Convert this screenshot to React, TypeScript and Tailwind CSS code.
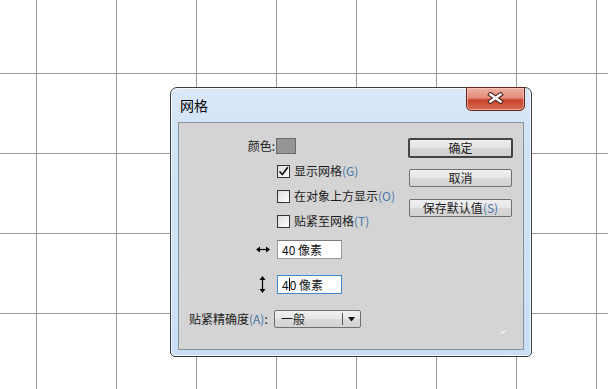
import React from "react";

const Mn = ({ children }: { children: React.ReactNode }) => (
  <span className="text-[#4b74a8]">{children}</span>
);

const Checkbox = ({ checked }: { checked?: boolean }) => (
  <div className="w-[13px] h-[13px] border border-[#333333] bg-[linear-gradient(135deg,#dcdcdc,#ffffff)] flex items-center justify-center shrink-0">
    {checked && (
      <svg width="11" height="11" viewBox="0 0 11 11">
        <path d="M1.5 5.5 L4.3 8.5 L9.8 1.2" fill="none" stroke="#111" strokeWidth="1.7" />
      </svg>
    )}
  </div>
);

const CheckRow = ({ checked, children }: { checked?: boolean; children: React.ReactNode }) => (
  <div className="mt-[9px] h-[16px] flex items-center pl-[98px]">
    <Checkbox checked={checked} />
    <span className="ml-[4px] leading-[16px] whitespace-nowrap">{children}</span>
  </div>
);

const Btn = ({ children, def }: { children: React.ReactNode; def?: boolean }) => (
  <div
    className={
      def
        ? "h-[20px] w-[105px] border-2 border-[#434343] rounded-[2px] bg-[linear-gradient(to_bottom,#eeeeee,#e4e4e4_50%,#d7d7d7_50%,#d0d0d0)] flex items-center justify-center leading-[16px]"
        : "h-[18px] w-[103px] mx-[1px] border border-[#707070] rounded-[2px] bg-[linear-gradient(to_bottom,#f0f0f0,#e6e6e6_50%,#d9d9d9_50%,#d2d2d2)] flex items-center justify-center leading-[16px]"
    }
  >
    {children}
  </div>
);

export default function App() {
  return (
    <div className="w-[608px] h-[389px] overflow-hidden bg-white bg-[linear-gradient(to_right,#9a9a9a_1px,transparent_1px),linear-gradient(to_bottom,#9a9a9a_1px,transparent_1px)] bg-[size:80px_80px] bg-[position:36px_73px] pl-[170px] pt-[87px] font-['Noto_Sans_CJK_SC','Noto_Sans',sans-serif] text-[12px] text-[#1b1b1b]">
      <div className="w-[362px] h-[270px] rounded-t-[7px] rounded-b-[5px] border border-[#3a3d42] bg-[linear-gradient(to_bottom,#dbe9f9,#d2e4f7_40px,#c9dff5)] shadow-[inset_0_0_0_1px_rgba(255,255,255,0.75)] flex flex-col px-[7px] pb-[6px]">
        <div className="h-[34px] flex items-start justify-between">
          <div className="pl-[2px] pt-[8px] text-[14px] leading-[18px] text-black">网格</div>
          <div className="w-[59px] h-[24px] -mt-[1px] -mr-[1px] rounded-b-[5px] border border-[#6b2419] bg-[linear-gradient(to_bottom,#eeb0a2,#e28c78_45%,#c8452d_55%,#d66a50)] shadow-[inset_0_0_0_1px_rgba(255,215,205,0.55)] flex items-center justify-center pb-[2px]">
            <svg width="17" height="12" viewBox="0 0 17 12">
              <path d="M3.5 2.5 L13.5 9.5 M13.5 2.5 L3.5 9.5" stroke="#4a1f18" strokeWidth="4.6" strokeLinecap="square" fill="none" />
              <path d="M3.5 2.5 L13.5 9.5 M13.5 2.5 L3.5 9.5" stroke="#ffffff" strokeWidth="2.6" strokeLinecap="square" fill="none" />
            </svg>
          </div>
        </div>
        <div className="flex-1 border border-[#8a939c] bg-[#d4d4d4] flex relative">
          <div className="w-[229px] pt-[15px] flex flex-col">
            <div className="h-[16px] flex items-center">
              <div className="w-[97px] flex justify-end pr-[1px] leading-[16px]">颜色:</div>
              <div className="w-[20px] h-[16px] bg-[#959595] border border-[#6b6b6b]" />
            </div>
            <CheckRow checked>
              显示网格<Mn>(G)</Mn>
            </CheckRow>
            <CheckRow>
              在对象上方显示<Mn>(O)</Mn>
            </CheckRow>
            <CheckRow>
              贴紧至网格<Mn>(T)</Mn>
            </CheckRow>
            <div className="mt-[11px] h-[19px] flex items-center">
              <div className="w-[98px] flex justify-end pr-[7px]">
                <svg width="14" height="7" viewBox="0 0 14 7">
                  <path d="M3 3.5 H11" stroke="#000" strokeWidth="1.2" />
                  <path d="M0 3.5 L4 0.5 L4 6.5 Z M14 3.5 L10 0.5 L10 6.5 Z" fill="#000" />
                </svg>
              </div>
              <div className="w-[65px] h-[19px] bg-white border border-[#9a9a9a] border-t-[#7a7a7a] flex items-center pl-[4px] leading-[16px] text-[#111]">
                40 像素
              </div>
            </div>
            <div className="mt-[16px] h-[19px] flex items-center">
              <div className="w-[98px] flex justify-end pr-[11px]">
                <svg width="7" height="17" viewBox="0 0 7 17">
                  <path d="M3.5 3 V14" stroke="#000" strokeWidth="1.2" />
                  <path d="M3.5 0 L0.5 4 L6.5 4 Z M3.5 17 L0.5 13 L6.5 13 Z" fill="#000" />
                </svg>
              </div>
              <div className="w-[65px] h-[19px] bg-white border border-[#3d8ad0] flex items-center pl-[4px] leading-[16px] text-[#111]">
                4<span className="inline-block w-px h-[13px] bg-black" />0 像素
              </div>
            </div>
            <div className="mt-[16px] h-[18px] flex items-center pl-[10px]">
              <div className="w-[85px] leading-[16px] whitespace-nowrap">
                贴紧精确度<Mn>(A)</Mn>:
              </div>
              <div className="w-[87px] h-[18px] border border-[#707070] rounded-[2px] bg-[linear-gradient(to_bottom,#f0f0f0,#e6e6e6_50%,#dadada_50%,#d3d3d3)] flex items-center">
                <span className="flex-1 pl-[6px] leading-[16px]">一般</span>
                <span className="w-px h-[12px] bg-[#555]" />
                <span className="w-[17px] flex justify-center">
                  <svg width="7" height="5" viewBox="0 0 7 5">
                    <path d="M0 0 H7 L3.5 4.5 Z" fill="#111" />
                  </svg>
                </span>
              </div>
            </div>
          </div>
          <div className="w-[105px] pt-[15px] flex flex-col">
            <Btn def>确定</Btn>
            <div className="mt-[11px]">
              <Btn>取消</Btn>
            </div>
            <div className="mt-[12px]">
              <Btn>
                保存默认值<Mn>(S)</Mn>
              </Btn>
            </div>
          </div>
          <svg className="absolute right-[17px] bottom-[15px]" width="6" height="4" viewBox="0 0 6 4">
            <path d="M0.5 3.5 L5.5 0.8" stroke="#f4f4f4" strokeWidth="1.4" />
          </svg>
        </div>
      </div>
    </div>
  );
}
